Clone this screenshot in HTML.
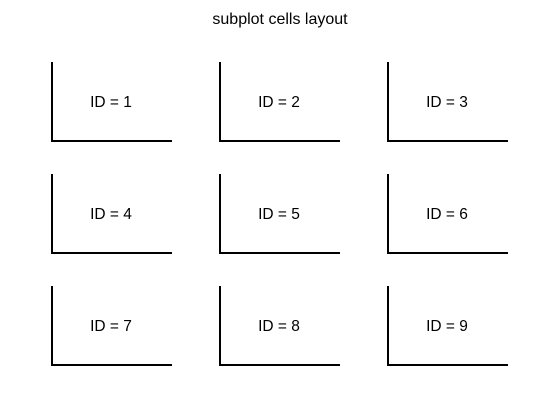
<!DOCTYPE html>
<html><head><style>
body{margin:0;width:560px;height:420px;background:#fff;position:relative;overflow:hidden;font-family:"Liberation Sans",sans-serif;color:#000}
.t{position:absolute;left:0;width:560px;top:11px;text-align:center;font-size:16px;line-height:18px}
.ax{position:absolute;width:119px;height:78px;border-left:2px solid #000;border-bottom:2px solid #000}
.lb{position:absolute;font-size:15.5px;width:120px;text-align:center;line-height:18px}
</style></head><body>
<div class="t">subplot cells layout</div>
<div class="ax" style="left:51px;top:62px"></div><div class="lb" style="left:51px;top:94px">ID = 1</div>
<div class="ax" style="left:219px;top:62px"></div><div class="lb" style="left:219px;top:94px">ID = 2</div>
<div class="ax" style="left:387px;top:62px"></div><div class="lb" style="left:387px;top:94px">ID = 3</div>
<div class="ax" style="left:51px;top:174px"></div><div class="lb" style="left:51px;top:206px">ID = 4</div>
<div class="ax" style="left:219px;top:174px"></div><div class="lb" style="left:219px;top:206px">ID = 5</div>
<div class="ax" style="left:387px;top:174px"></div><div class="lb" style="left:387px;top:206px">ID = 6</div>
<div class="ax" style="left:51px;top:286px"></div><div class="lb" style="left:51px;top:318px">ID = 7</div>
<div class="ax" style="left:219px;top:286px"></div><div class="lb" style="left:219px;top:318px">ID = 8</div>
<div class="ax" style="left:387px;top:286px"></div><div class="lb" style="left:387px;top:318px">ID = 9</div>
</body></html>
